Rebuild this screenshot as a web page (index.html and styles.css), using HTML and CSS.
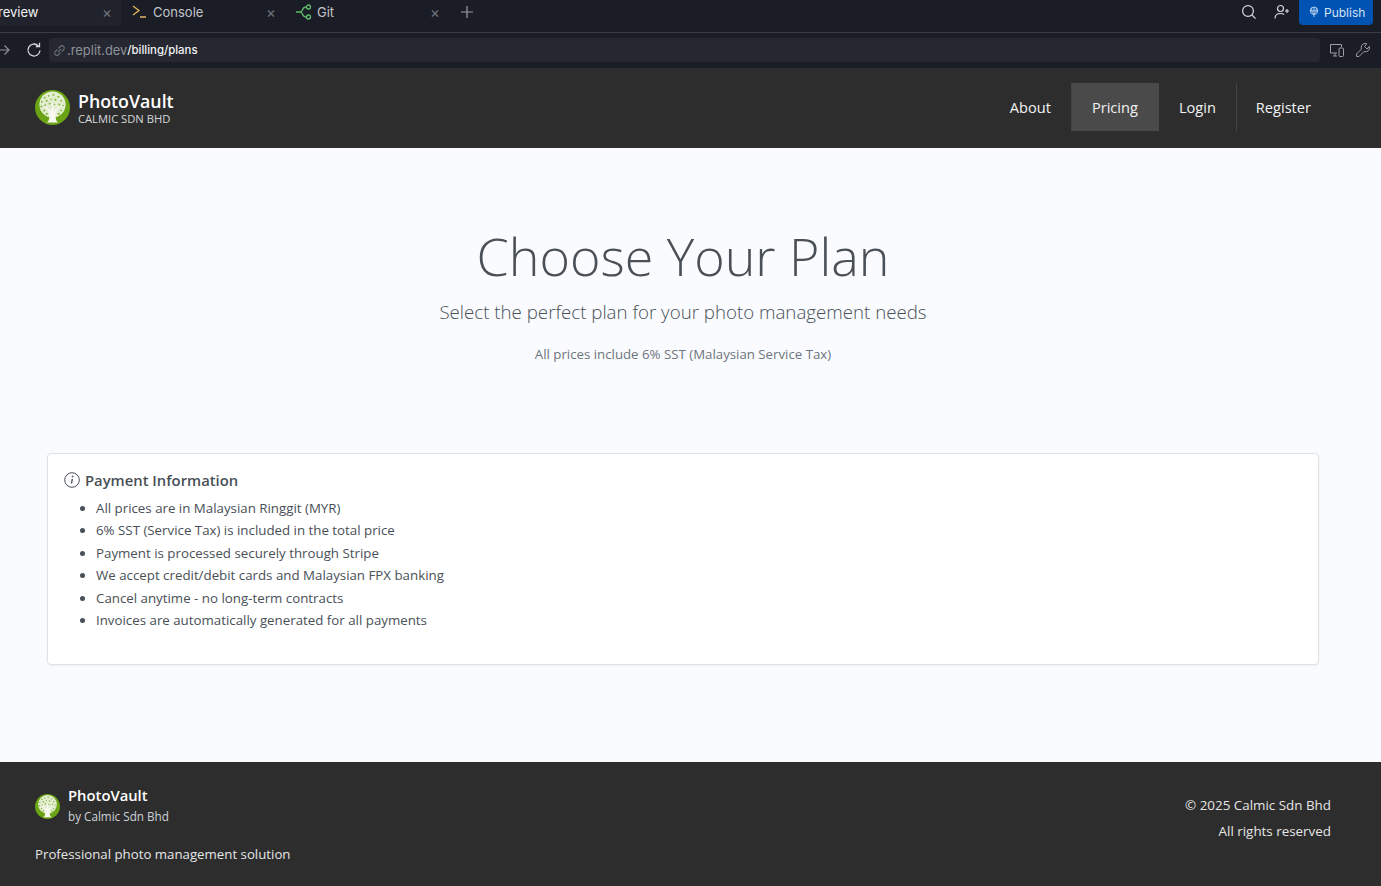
FILE: index.html
```html
<!DOCTYPE html>
<html lang="en">
<head>
    <meta charset="UTF-8">
    <meta name="viewport" content="width=device-width, initial-scale=1.0">
    <title>PhotoVault - Plans</title>
    <link rel="stylesheet" href="styles.css">
</head>
<body>
    <div class="ide">
        <div class="tabs">
            <div class="tab tab-active"><span class="tab-name tab-cut">review</span><span class="tab-x">×</span></div>
            <div class="tab">
                <svg class="tab-icon" viewBox="0 0 16 16" fill="none" stroke="#e2b858" stroke-width="1.3"><path d="M1 2l6 4.500-6 4.500M8 13h6"/></svg>
                <span class="tab-name">Console</span><span class="tab-x">×</span>
            </div>
            <div class="tab">
                <svg class="tab-icon" viewBox="0 0 16 16" fill="none" stroke="#5dbb6c" stroke-width="1.3"><path d="M0 8h4M4 8c3.500 0 1.500-5 6-5M4 8c3.500 0 1.500 5 6 5"/><circle cx="12.500" cy="3" r="2"/><circle cx="12.500" cy="13" r="2"/></svg>
                <span class="tab-name">Git</span><span class="tab-x">×</span>
            </div>
            <svg class="plus" viewBox="0 0 12 12" fill="none" stroke="#9a9ea6" stroke-width="1.2"><path d="M6 0v12M0 6h12"/></svg>
            <div class="tabs-right">
                <svg class="tool-icon" viewBox="0 0 16 16" fill="none" stroke="#d8dade" stroke-width="1.2"><circle cx="7" cy="7" r="5.400"/><path d="M11 11l3.600 3.600"/></svg>
                <svg class="tool-icon" viewBox="0 0 16 16" fill="none" stroke="#d8dade" stroke-width="1.2"><circle cx="6.500" cy="4.500" r="3"/><path d="M1 14.500c0-3.500 2-5 5.500-5 1.500 0 2.700.3 3.500 1M13 5v4M11 7h4"/></svg>
                <div class="publish">
                    <svg class="publish-icon" viewBox="0 0 12 14" fill="none" stroke="#c9dcf5" stroke-width="1"><circle cx="6" cy="5.500" r="4.500"/><path d="M1.500 5.500h9M6 1v12M3.500 2c-.6 2-.6 5 2.500 8M8.500 2c.6 2 .6 5-2.500 8"/></svg>
                    Publish
                </div>
            </div>
        </div>
        <div class="addr-row">
            <svg class="nav-arrow" viewBox="0 0 10 12" fill="none" stroke="#8d9199" stroke-width="1.2"><path d="M0 6h9M4.500 1.500L9 6l-4.500 4.500"/></svg>
            <svg class="reload" viewBox="0 0 16 16" fill="none" stroke="#d8dade" stroke-width="1.300"><path d="M14 8.500a6 6 0 1 1-1.800-4.800M13.500 .8V4.500H9.800"/></svg>
            <div class="addr">
                <svg class="link-icon" viewBox="0 0 12 12" fill="none" stroke="#71757e" stroke-width="1"><path d="M4.500 7.500l3-3M4 5L2.200 6.800a2.100 2.100 0 0 0 3 3L7 8M5 4l1.800-1.800a2.100 2.100 0 0 1 3 3L8 7"/></svg>
                <span class="addr-host">.replit.dev</span><span class="addr-path">/billing/plans</span>
            </div>
            <svg class="tool-icon" viewBox="0 0 16 16" fill="none" stroke="#9a9ea6" stroke-width="1"><path d="M8 11H1.500V2.500h11V5M4 14h4M6 11v3"/><rect x="10" y="6" width="4.500" height="8.500" rx="1"/></svg>
            <svg class="tool-icon" viewBox="0 0 16 16" fill="none" stroke="#9a9ea6" stroke-width="1"><path d="M10 1.500a4 4 0 0 0-3.500 5.500L1.500 12v2.500H4l5-5a4 4 0 0 0 5.300-5L12 7 9.500 4.500l2.300-2.700A4 4 0 0 0 10 1.500z"/></svg>
        </div>
    </div>

    <nav class="navbar">
        <div class="brand">
            <svg class="logo logo-lg" viewBox="0 0 36 36"><use href="#tree"/></svg>
            <div>
                <div class="brand-name">PhotoVault</div>
                <div class="brand-sub">CALMIC SDN BHD</div>
            </div>
        </div>
        <ul class="nav-links">
            <li><a class="nav-link">About</a></li>
            <li><a class="nav-link active">Pricing</a></li>
            <li><a class="nav-link">Login</a></li>
            <li><a class="nav-link nav-sep">Register</a></li>
        </ul>
    </nav>

    <main class="content">
        <header class="hero">
            <h1>Choose Your Plan</h1>
            <p class="lead">Select the perfect plan for your photo management needs</p>
            <p class="note">All prices include 6% SST (Malaysian Service Tax)</p>
        </header>

        <section class="card">
            <h5><svg class="info" viewBox="0 0 16 16" fill="none" stroke="#495057"><circle cx="8" cy="8" r="7.300"/><path stroke-width="1.300" d="M8.400 6.800L7.500 11.500"/><circle cx="8.600" cy="4.500" r=".5" fill="#495057"/></svg>Payment Information</h5>
            <ul>
                <li>All prices are in Malaysian Ringgit (MYR)</li>
                <li>6% SST (Service Tax) is included in the total price</li>
                <li>Payment is processed securely through Stripe</li>
                <li>We accept credit/debit cards and Malaysian FPX banking</li>
                <li>Cancel anytime - no long-term contracts</li>
                <li>Invoices are automatically generated for all payments</li>
            </ul>
        </section>
    </main>

    <footer class="footer">
        <div>
            <div class="brand">
                <svg class="logo logo-sm" viewBox="0 0 36 36"><use href="#tree"/></svg>
                <div>
                    <div class="footer-name">PhotoVault</div>
                    <div class="footer-sub">by Calmic Sdn Bhd</div>
                </div>
            </div>
            <p class="tagline">Professional photo management solution</p>
        </div>
        <div class="footer-right">
            <p>© 2025 Calmic Sdn Bhd</p>
            <p class="rights">All rights reserved</p>
        </div>
    </footer>

    <svg class="defs" aria-hidden="true">
        <symbol id="tree" viewBox="0 0 36 36">
            <circle cx="18" cy="18" r="18" fill="#6aa313"/>
            <circle cx="18" cy="15" r="13.500" fill="#e3edcf"/>
            <g fill="#82b33a">
                <circle cx="10" cy="8" r="1"/><circle cx="14" cy="6" r=".9"/><circle cx="19" cy="5" r="1"/><circle cx="24" cy="7" r="1"/>
                <circle cx="27" cy="11" r=".9"/><circle cx="7" cy="12" r=".9"/><circle cx="12" cy="11" r="1.100"/><circle cx="16.500" cy="9.500" r=".8"/>
                <circle cx="21" cy="10" r="1.100"/><circle cx="25" cy="15" r="1"/><circle cx="29" cy="16" r=".8"/><circle cx="6.500" cy="17" r="1"/>
                <circle cx="10.500" cy="15.500" r=".9"/><circle cx="15" cy="14" r="1"/><circle cx="20" cy="15" r=".8"/><circle cx="9.500" cy="21" r="1"/>
                <circle cx="13" cy="19.500" r=".9"/><circle cx="23" cy="19.500" r="1"/><circle cx="27" cy="21" r=".9"/><circle cx="6" cy="8" r=".7"/>
                <circle cx="12" cy="24.500" r="1.100"/><circle cx="24.500" cy="24.500" r="1.100"/><circle cx="17.500" cy="17.500" r=".8"/>
            </g>
            <path fill="#f7f9f0" d="M12 33.500c2.500-1 3-5 3-10l-5-6 1-1 5.500 5 1-8h1l1 8 5-5 1 1-4.500 6c0 5 .5 9 3 10z"/>
        </symbol>
    </svg>
</body>
</html>
```

FILE: styles.css
```css
* {
    box-sizing: border-box;
}

body {
    margin: 0;
    font-family: "Open Sans", "Noto Sans", Arial, sans-serif;
    background-color: #fafbfe;
    color: #495057;
}

p {
    margin: 0;
}

.defs {
    display: none;
}

/* ide chrome on top */
.ide {
    height: 68px;
    background-color: #1a1d25;
    color: #c2c5cb;
    font-size: 13px;
    font-family: Inter, "Open Sans", sans-serif;
}

.tabs {
    display: flex;
    align-items: flex-start;
    height: 33px;
    border-bottom: 1px solid #3a3d45;
}

.tab {
    display: flex;
    align-items: center;
    width: 164px;
    height: 24px;
    padding-left: 11px;
    padding-right: 9px;
}

.tab-active {
    width: 121px;
    height: 26px;
    padding-bottom: 2px;
    padding-left: 0;
    background-color: #20232b;
    border-radius: 0 0 4px 0;
    color: #f0f1f3;
}

.tab-name {
    flex: 1;
}

.tab-cut {
    margin-left: -2px;
}

.tab-icon {
    width: 16px;
    height: 16px;
    margin-right: 5px;
}

.tab-x {
    font-size: 15px;
    color: #70747c;
}

.plus {
    width: 12px;
    height: 12px;
    margin-left: 12px;
    margin-top: 6px;
}

.tabs-right {
    display: flex;
    align-items: flex-start;
    margin-left: auto;
    padding-right: 8px;
}

.tabs-right .tool-icon {
    margin-top: 4px;
    margin-right: 16px;
}

.tabs-right .tool-icon + .tool-icon {
    margin-left: 1px;
    margin-right: 9px;
}

.tool-icon {
    width: 16px;
    height: 16px;
    flex: none;
}

.publish {
    display: flex;
    align-items: center;
    gap: 5px;
    width: 74px;
    height: 25px;
    padding: 0 0 1px 10px;
    background-color: #0053b3;
    border-radius: 0 0 4px 4px;
    color: #d6e3f5;
    font-size: 12px;
}

.publish-icon {
    width: 10px;
    height: 12px;
}

.addr-row {
    display: flex;
    align-items: center;
    height: 35px;
    padding-right: 10px;
    padding-bottom: 1px;
    gap: 10px;
}

.nav-arrow {
    width: 10px;
    height: 12px;
    flex: none;
}

.reload {
    width: 16px;
    height: 16px;
    margin-left: 6px;
    flex: none;
}

.addr {
    flex: 1;
    display: flex;
    align-items: center;
    height: 24px;
    margin-left: -3px;
    margin-right: -1px;
    padding-left: 4px;
    background-color: #252830;
    border-radius: 4px;
    font-size: 12.900px;
}

.link-icon {
    width: 13px;
    height: 13px;
    margin-right: 1px;
}

.addr-host {
    color: #8d9199;
}

.addr-path {
    color: #f0f1f3;
    font-size: 11.400px;
    font-weight: 500;
}

/* site navbar */
.navbar {
    display: flex;
    align-items: center;
    justify-content: space-between;
    height: 80px;
    padding: 0 50px 2px 35px;
    background-color: #2d2d2d;
    color: #fff;
}

.brand {
    display: flex;
    align-items: center;
}

.logo {
    flex: none;
}

.logo-lg {
    width: 35px;
    height: 35px;
    margin-right: 8px;
}

.logo-sm {
    width: 25px;
    height: 25px;
    margin-right: 8px;
}

.brand-name {
    font-size: 17.800px;
    font-weight: 600;
    line-height: 24px;
}

.brand-sub {
    font-size: 11.200px;
    line-height: 12px;
    color: #d5d8dc;
}

.nav-links {
    display: flex;
    margin: 0;
    padding: 0;
    list-style: none;
}

.nav-link {
    display: block;
    height: 48px;
    padding: 0 20px;
    line-height: 48px;
    font-size: 14.600px;
    color: #f2f2f2;
}

.nav-link.active {
    padding-right: 21px;
    background-color: #4a4a4a;
    border-left: 1px solid #444;
}

.nav-sep {
    padding-left: 19px;
    border-left: 1px solid #444;
}

/* main part */
.content {
    height: 614px;
    padding: 77px 62px 0 47px;
    overflow: hidden;
}

.hero {
    text-align: center;
}

.hero h1 {
    margin: 0;
    font-size: 52px;
    font-weight: 300;
    line-height: 62px;
    color: #495057;
}

.lead {
    margin-top: 10px;
    font-size: 18.700px;
    font-weight: 300;
    line-height: 30px;
    color: #495057;
}

.note {
    margin-top: 17px;
    font-size: 13.250px;
    line-height: 20px;
    color: #6c757d;
}

.card {
    height: 212px;
    margin-top: 89px;
    padding: 15px 16px 16px;
    background-color: #fff;
    border: 1px solid #dee2e6;
    border-radius: 4px;
    box-shadow: 0 1px 2px rgba(0, 0, 0, 0.05);
}

.card h5 {
    display: flex;
    align-items: center;
    margin: 0 0 6px;
    font-size: 14.800px;
    font-weight: 600;
    line-height: 22px;
}

.info {
    width: 16px;
    height: 16px;
    margin-right: 5px;
}

.card ul {
    margin: 0;
    padding-left: 32px;
    font-size: 13.300px;
    line-height: 22.400px;
}

/* footer */
.footer {
    display: flex;
    justify-content: space-between;
    height: 124px;
    padding: 23px 50px 0 35px;
    background-color: #2d2d2d;
    color: #e6e6e6;
}

.footer-name {
    font-size: 14.800px;
    font-weight: 600;
    line-height: 21px;
    color: #fff;
}

.footer-sub {
    font-size: 11.700px;
    line-height: 21px;
    color: #cfd3d8;
}

.tagline {
    margin-top: 17px;
    font-size: 13.250px;
    line-height: 20px;
}

.footer-right {
    text-align: right;
    font-size: 13.400px;
    line-height: 20px;
    padding-top: 10px;
}

.rights {
    margin-top: 6px;
}
```
